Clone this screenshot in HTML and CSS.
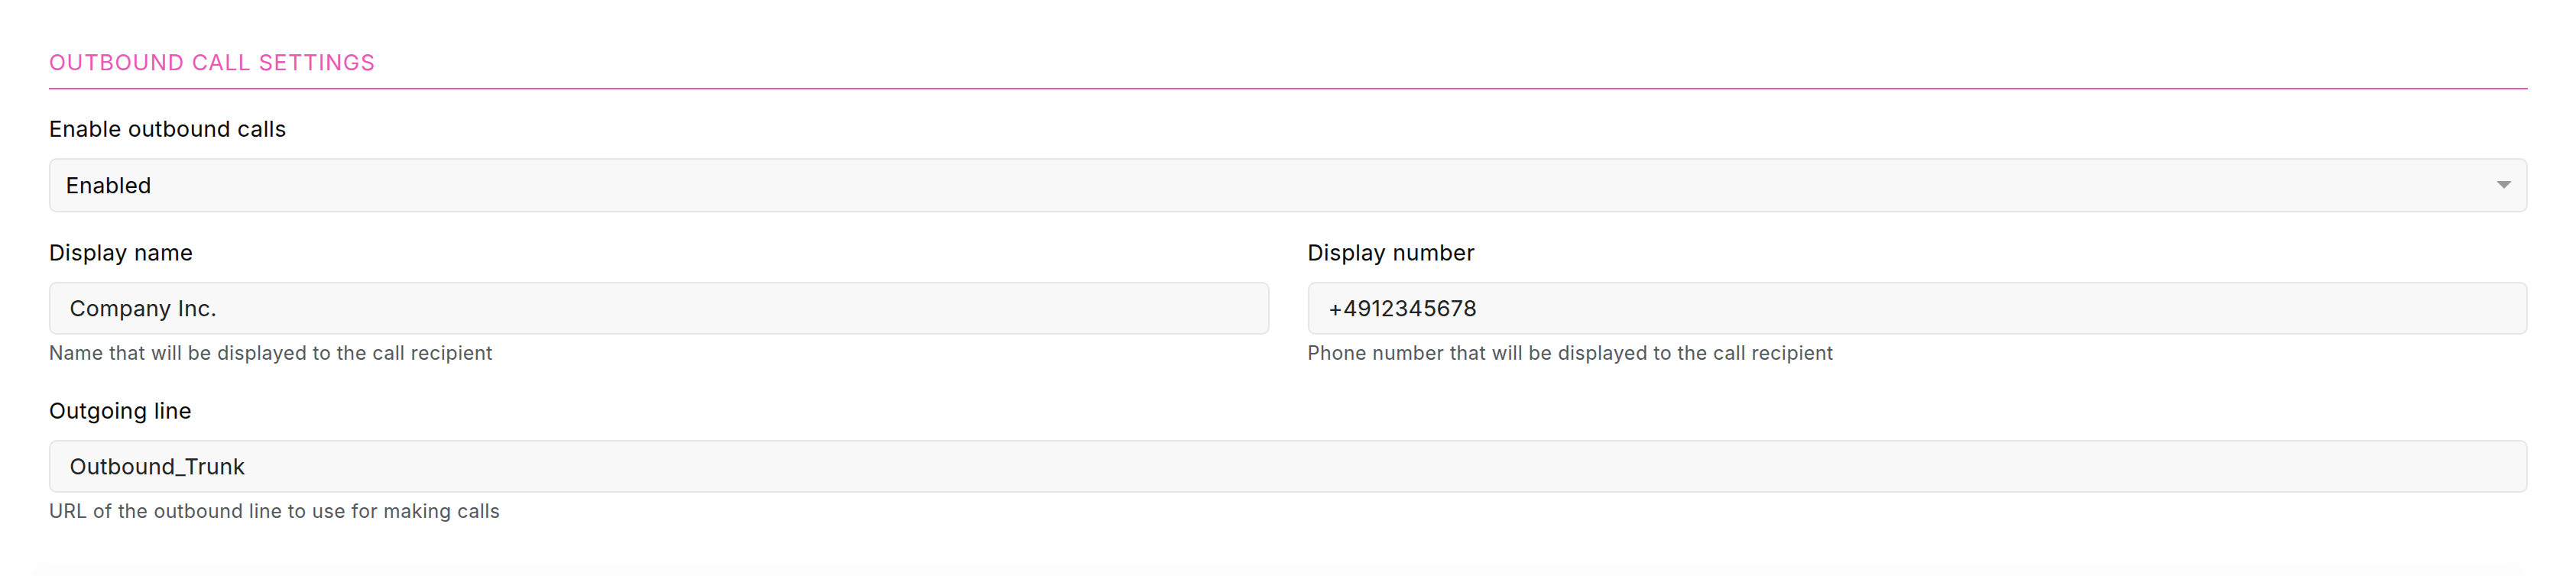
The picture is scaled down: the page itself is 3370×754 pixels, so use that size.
FILE: index.html
```html
<!DOCTYPE html>
<html lang="en">
<head>
    <meta charset="UTF-8">
    <meta name="viewport" content="width=device-width, initial-scale=1.0">
    <title>Outbound call settings</title>
    <link rel="stylesheet" href="styles.css">
</head>
<body>
    <div class="settings">
        <h2 class="section-title">Outbound call settings</h2>

        <div class="field">
            <label class="field-label" for="enable-outbound">Enable outbound calls</label>
            <div class="select-wrap">
                <select id="enable-outbound" class="control">
                    <option selected>Enabled</option>
                    <option>Disabled</option>
                </select>
                <span class="select-arrow"></span>
            </div>
        </div>

        <div class="field-row">
            <div class="field">
                <label class="field-label" for="display-name">Display name</label>
                <input id="display-name" class="control" type="text" value="Company Inc.">
                <p class="field-help">Name that will be displayed to the call recipient</p>
            </div>
            <div class="field">
                <label class="field-label" for="display-number">Display number</label>
                <input id="display-number" class="control" type="text" value="+4912345678">
                <p class="field-help">Phone number that will be displayed to the call recipient</p>
            </div>
        </div>

        <div class="field">
            <label class="field-label" for="outgoing-line">Outgoing line</label>
            <input id="outgoing-line" class="control" type="text" value="Outbound_Trunk">
            <p class="field-help">URL of the outbound line to use for making calls</p>
        </div>

        <div class="next-card"></div>
    </div>
</body>
</html>
```

FILE: styles.css
```css
body {
    font-family: Inter, "Noto Sans", sans-serif;
    margin: 0;
    padding: 0;
    background: #ffffff;
    color: #0b0b0b;
    overflow: hidden;
}

.settings {
    padding: 62px 63px 0 64px;
}

.section-title {
    margin: 0;
    padding-bottom: 13px;
    border-bottom: 2px solid #e25bb4;
    font-size: 29px;
    font-weight: 400;
    line-height: 40px;
    letter-spacing: 1.2px;
    text-transform: uppercase;
    color: #ec58b5;
}

.field {
    display: flex;
    flex-direction: column;
    margin-top: 33px;
}

.section-title + .field {
    margin-top: 32px;
}

.field-row {
    display: grid;
    grid-template-columns: 1fr 1fr;
    gap: 50px;
}

.field-label {
    font-size: 29px;
    line-height: 40px;
    letter-spacing: 0.4px;
    margin-bottom: 18px;
}

.control {
    box-sizing: border-box;
    width: 100%;
    height: 69px;
    padding: 0 25px;
    font-family: inherit;
    font-size: 29px;
    letter-spacing: 0.3px;
    color: #212325;
    background: #f8f8f8;
    border: 2px solid #e6e6e6;
    border-radius: 10px;
    outline: none;
}

.select-wrap {
    position: relative;
}

.select-wrap .control {
    height: 71px;
    padding-left: 20px;
    appearance: none;
    -webkit-appearance: none;
    color: #0b0b0b;
}

.select-arrow {
    position: absolute;
    right: 21px;
    top: 30px;
    width: 0;
    height: 0;
    border-left: 10px solid transparent;
    border-right: 10px solid transparent;
    border-top: 10px solid #999999;
    pointer-events: none;
}

.field-help {
    margin: 6px 0 5px;
    font-size: 25px;
    line-height: 36px;
    letter-spacing: 0.5px;
    color: #53585d;
}

.next-card {
    height: 40px;
    margin: 48px 0 0 -24px;
    border-radius: 24px 24px 0 0;
    background: #fdfdfd;
    box-shadow: 0 -2px 16px rgba(0, 0, 0, 0.015);
}
```
